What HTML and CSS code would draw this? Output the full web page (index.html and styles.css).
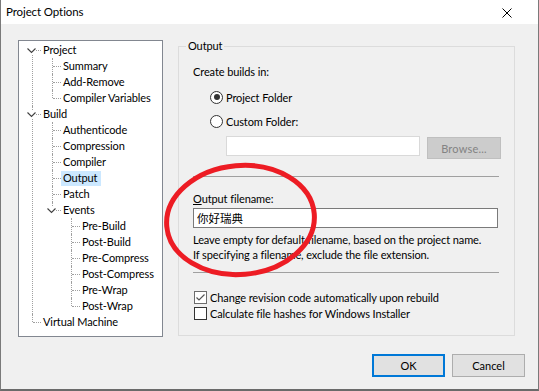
FILE: index.html
```html
<!DOCTYPE html>
<html lang="en">
<head>
  <meta charset="UTF-8">
  <meta name="viewport" content="width=device-width, initial-scale=1.0">
  <title>Project Options</title>
  <link rel="stylesheet" href="styles.css">
</head>
<body>
  <div class="window">
    <div class="titlebar">
      <span class="title">Project Options</span>
      <svg class="close" width="10" height="10" viewBox="0 0 10 10">
        <path d="M0.5 0.5 L9.5 9.5 M9.5 0.5 L0.5 9.5" stroke="#000" stroke-width="1" fill="none"/>
      </svg>
    </div>

    <div class="dialog">
      <div class="main">
        <div class="tree">
          <ul>
            <li>
              <div class="row"><span class="exp"><svg width="9" height="9" viewBox="0 0 9 9"><polyline points="0.5,2.5 4.5,6.5 8.5,2.5" fill="none" stroke="#404040" stroke-width="1.1"/></svg></span><span class="label">Project</span></div>
              <ul>
                <li><div class="row"><span class="label">Summary</span></div></li>
                <li><div class="row"><span class="label">Add-Remove</span></div></li>
                <li><div class="row"><span class="label">Compiler Variables</span></div></li>
              </ul>
            </li>
            <li>
              <div class="row"><span class="exp"><svg width="9" height="9" viewBox="0 0 9 9"><polyline points="0.5,2.5 4.5,6.5 8.5,2.5" fill="none" stroke="#404040" stroke-width="1.1"/></svg></span><span class="label">Build</span></div>
              <ul>
                <li><div class="row"><span class="label">Authenticode</span></div></li>
                <li><div class="row"><span class="label">Compression</span></div></li>
                <li><div class="row"><span class="label">Compiler</span></div></li>
                <li><div class="row"><span class="label selected">Output</span></div></li>
                <li><div class="row"><span class="label">Patch</span></div></li>
                <li>
                  <div class="row"><span class="exp"><svg width="9" height="9" viewBox="0 0 9 9"><polyline points="0.5,2.5 4.5,6.5 8.5,2.5" fill="none" stroke="#404040" stroke-width="1.1"/></svg></span><span class="label">Events</span></div>
                  <ul>
                    <li><div class="row"><span class="label">Pre-Build</span></div></li>
                    <li><div class="row"><span class="label">Post-Build</span></div></li>
                    <li><div class="row"><span class="label">Pre-Compress</span></div></li>
                    <li><div class="row"><span class="label">Post-Compress</span></div></li>
                    <li><div class="row"><span class="label">Pre-Wrap</span></div></li>
                    <li><div class="row"><span class="label">Post-Wrap</span></div></li>
                  </ul>
                </li>
              </ul>
            </li>
            <li><div class="row"><span class="label">Virtual Machine</span></div></li>
          </ul>
        </div>

        <fieldset class="group">
          <legend>Output</legend>
          <div class="group-body">
            <div class="caption">Create builds in:</div>
            <div class="option first"><span class="radio checked"></span>Project Folder</div>
            <div class="option"><span class="radio"></span>Custom Folder:</div>
            <div class="folder-row">
              <input class="field light" type="text">
              <button class="browse" type="button">Browse...</button>
            </div>
            <div class="separator"></div>
            <div class="caption filename"><u>O</u>utput filename:</div>
            <input class="field wide" type="text" value="你好瑞典">
            <div class="hint">
              <div>Leave empty for default filename, based on the project name.</div>
              <div>If specifying a filename, exclude the file extension.</div>
            </div>
            <div class="separator second"></div>
            <div class="option check-first"><span class="check on"><svg width="11" height="11" viewBox="0 0 11 11"><polyline points="1.5,5.5 4,8 9.5,2.5" fill="none" stroke="#555" stroke-width="1.2"/></svg></span>Change revision code automatically upon rebuild</div>
            <div class="option check-next"><span class="check"></span>Calculate file hashes for Windows Installer</div>
          </div>
        </fieldset>
      </div>

      <div class="footer">
        <button class="btn default" type="button">OK</button>
        <button class="btn" type="button">Cancel</button>
      </div>
    </div>

    <!-- red hand-drawn highlight over the filename field -->
    <svg class="annotation" width="539" height="391" viewBox="0 0 539 391">
      <ellipse cx="240.5" cy="220" rx="74" ry="54.5" transform="rotate(-5 240.5 220)" fill="none" stroke="#ed1c24" stroke-width="5"/>
    </svg>
  </div>
</body>
</html>
```
FILE: styles.css
```css
* {
  box-sizing: border-box;
}

html {
  background: #f0f0f0;
}

body {
  margin: 0;
  font-family: Lato, "Noto Sans", sans-serif;
  font-size: 11px;
  letter-spacing: -0.1px;
  color: #000;
}

.window {
  position: relative;
  width: 539px;
  height: 391px;
  border-left: 1px solid #7a7a7a;
  border-right: 1px solid #7a7a7a;
  border-bottom: 2px solid #6a6a6a;
  background: #f0f0f0;
  overflow: hidden;
}

.titlebar {
  height: 24px;
  background: #fff;
  display: flex;
  align-items: center;
  justify-content: space-between;
  padding: 0 26px 0 5px;
}

.title {
  font-size: 11.5px;
  line-height: 24px;
}

.close {
  display: block;
  margin-top: 1px;
}

.main {
  display: flex;
  align-items: flex-start;
  padding: 16px 0 0 17px;
}

/* tree view */

.tree {
  width: 145px;
  height: 297px;
  background: #fff;
  border: 1px solid #828790;
  padding-top: 1px;
  overflow: hidden;
}

.tree ul {
  list-style: none;
  margin: 0;
  padding: 0;
}

.tree ul ul {
  padding-left: 20px;
}

.tree ul ul ul {
  padding-left: 19px;
}

.tree li {
  position: relative;
}

.tree li::before {
  content: '';
  position: absolute;
  left: 13px;
  top: 0;
  bottom: 0;
  border-left: 1px dotted #a0a0a0;
}

.tree li:last-child::before {
  bottom: auto;
  height: 8px;
}

.tree > ul > li:first-child::before {
  top: 8px;
}

.tree .row {
  position: relative;
  height: 16px;
  line-height: 16px;
  padding-left: 22px;
  white-space: nowrap;
}

.tree .row::before {
  content: '';
  position: absolute;
  left: 14px;
  top: 8px;
  width: 8px;
  border-top: 1px dotted #a0a0a0;
}

.tree .exp {
  position: absolute;
  left: 8px;
  top: 4px;
  width: 9px;
  height: 9px;
  background: #fff;
  z-index: 1;
}

.tree .exp svg {
  display: block;
}

.tree .label {
  display: inline-block;
  padding: 0 2px;
  height: 15px;
  line-height: 16px;
}

.tree .label.selected {
  background: #cce8ff;
  margin-top: 1px;
  line-height: 14px;
  padding-right: 4px;
}

/* output group */

.group {
  width: 337px;
  margin: -1px 0 0 15px;
  padding: 0 8px 14px 7px;
  border: 1px solid #dcdcdc;
  min-width: 0;
}

.group legend {
  padding: 0 2px;
  line-height: 14px;
}

.group-body {
  padding: 0 7px;
}

.caption {
  line-height: 16px;
  margin-top: 11px;
}

.option {
  display: flex;
  align-items: center;
  height: 16px;
  margin-top: 8px;
  padding-left: 17px;
  white-space: nowrap;
}

.option.first {
  margin-top: 9px;
}

.radio {
  width: 13px;
  height: 13px;
  border: 1px solid #333;
  border-radius: 50%;
  background: #fff;
  margin-right: 3px;
  display: flex;
  align-items: center;
  justify-content: center;
}

.radio.checked::after {
  content: '';
  width: 6px;
  height: 6px;
  border-radius: 50%;
  background: #333;
}

.folder-row {
  display: flex;
  align-items: flex-start;
  margin-top: 7px;
  padding-left: 33px;
  height: 23px;
}

.field {
  display: block;
  height: 20px;
  margin: 0;
  padding: 0 3px;
  border: 1px solid #7a7a7a;
  background: #fff;
  font-family: Lato, "Noto Sans CJK SC", sans-serif;
  font-size: 11.5px;
  color: #000;
  outline: none;
}

.field.light {
  width: 194px;
  border-color: #d9d9d9;
}

.field.wide {
  width: 305px;
  margin-top: 1px;
}

.browse {
  width: 74px;
  height: 22px;
  margin: 1px -2px 0 7px;
  padding: 0;
  border: 1px solid #bfbfbf;
  background: #cccccc;
  color: #838383;
  font: inherit;
  letter-spacing: 0.2px;
}

.separator {
  margin-top: 17px;
  border-top: 1px solid #a0a0a0;
}

.separator.second {
  margin-top: 10px;
}

.caption.filename {
  margin-top: 14px;
}

.hint {
  margin-top: 4px;
  line-height: 15px;
  white-space: nowrap;
}

.option.check-first {
  margin-top: 16px;
}

.option.check-next {
  margin-top: 0;
}

.check {
  flex: none;
  width: 13px;
  height: 13px;
  border: 1px solid #333;
  background: #fff;
  margin: 0 3px 0 -16px;
  display: flex;
  align-items: center;
  justify-content: center;
}

.check.on {
  border-color: #6d6d6d;
}

.check svg {
  display: block;
}

/* dialog buttons */

.footer {
  display: flex;
  justify-content: flex-end;
  gap: 7px;
  margin-top: 17px;
  padding-right: 13px;
}

.btn {
  width: 73px;
  height: 23px;
  padding: 0;
  border: 1px solid #adadad;
  background: #e1e1e1;
  font: inherit;
  color: #000;
}

.btn.default {
  border: 2px solid #0078d7;
}

.annotation {
  position: absolute;
  left: -1px;
  top: 0;
  pointer-events: none;
}
```
